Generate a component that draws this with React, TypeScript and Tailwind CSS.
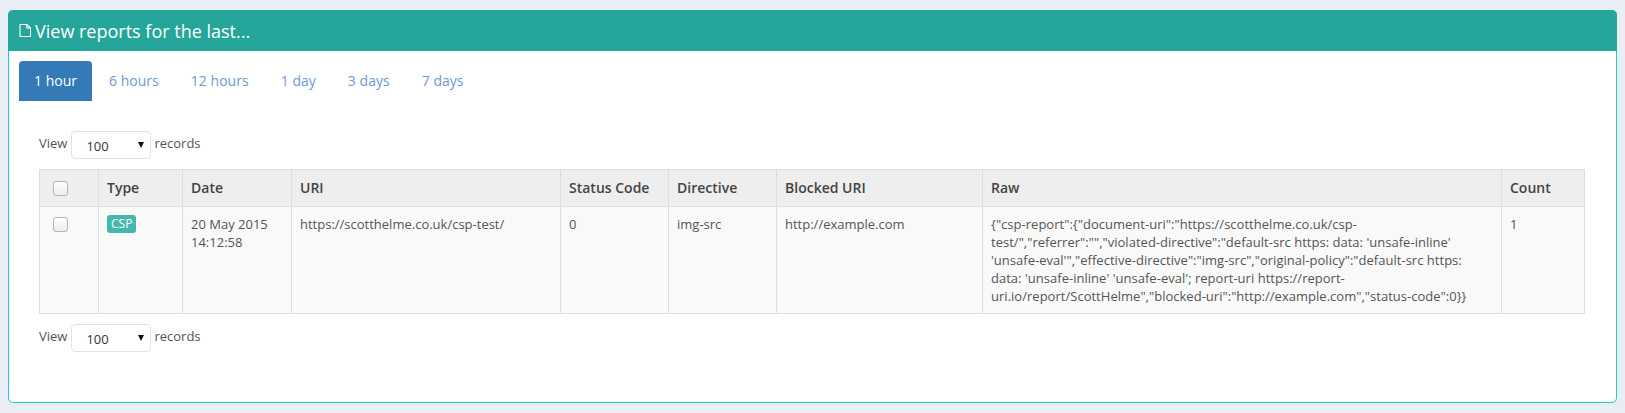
const tabs = ['1 hour', '6 hours', '12 hours', '1 day', '3 days', '7 days']

const raw = `{"csp-report":{"document-uri":"https://scotthelme.co.uk/csp-test/","referrer":"","violated-directive":"default-src https: data: 'unsafe-inline' 'unsafe-eval'","effective-directive":"img-src","original-policy":"default-src https: data: 'unsafe-inline' 'unsafe-eval'; report-uri https://report-uri.io/report/ScottHelme","blocked-uri":"http://example.com","status-code":0}}`

const cell = 'border border-[#dddddd] px-2 py-2 align-top text-[13px] leading-[18px] font-normal text-left'
const head = 'border border-[#dddddd] px-2 py-[9px] align-top text-[14px] leading-[18px] font-semibold text-left text-[#444444]'

function Checkbox() {
  return (
    <span className="block w-[15px] h-[15px] mt-[2px] ml-[5px] rounded-[3px] border border-[#b5b5b5] bg-gradient-to-b from-white to-[#ececec]" />
  )
}

function RecordsSelect() {
  return (
    <div className="flex items-center text-[13px] leading-[18px] text-[#555555]">
      <span className="mr-[4px] mb-[4px]">View</span>
      <div className="relative w-[80px] h-[28px] rounded-[4px] border border-[#e3e3e3] bg-white">
        <span className="block pl-[14px] pt-[5px] text-[13px] leading-[18px] text-[#333333]">100</span>
        <svg className="absolute right-[6px] top-[10px]" width="6" height="6" viewBox="0 0 6 6">
          <path d="M0 0h6L3 6z" fill="#111111" />
        </svg>
      </div>
      <span className="ml-[3px] mb-[4px]">records</span>
    </div>
  )
}

export default function App() {
  return (
    <div className="min-h-[413px] bg-[#e9edf4] px-2 pt-[10px] pb-[10px] font-['Open_Sans',sans-serif]">
      <div className="h-[393px] rounded-[5px] border border-[#1fd0c0] bg-white">
        {/* Header */}
        <div className="-mt-px -mx-px h-[41px] flex items-center pl-[11px] rounded-t-[5px] bg-[#26a69a] text-white text-[18px] leading-[20px]">
          <svg className="mr-[3px]" width="13" height="15" viewBox="0 0 13 15" fill="none" stroke="white" strokeWidth="1.1">
            <path d="M1 1.5h6.8L11.5 5v8.5H1z" />
            <path d="M7.8 1.5V5h3.7" />
          </svg>
          <span>View reports for the last...</span>
        </div>

        {/* Tabs */}
        <div className="flex gap-[2px] pt-[10px] pl-[10px]">
          {tabs.map((t, i) => (
            <span
              key={t}
              className={
                i === 0
                  ? 'h-[40px] px-[15px] py-[10px] rounded-t-[4px] bg-[#337ab7] text-white text-[14px] leading-[20px]'
                  : 'h-[40px] px-[15px] py-[10px] text-[#7098d4] text-[14px] leading-[20px] tracking-[0.03px]'
              }
            >
              {t}
            </span>
          ))}
        </div>

        {/* Table */}
        <div className="px-[30px] pt-[30px]">
          <RecordsSelect />
          <table className="mt-[10px] w-[1545px] table-fixed border-collapse text-[#555555]">
            <colgroup>
              <col className="w-[59px]" />
              <col className="w-[84px]" />
              <col className="w-[109px]" />
              <col className="w-[269px]" />
              <col className="w-[108px]" />
              <col className="w-[108px]" />
              <col className="w-[206px]" />
              <col className="w-[519px]" />
              <col className="w-[83px]" />
            </colgroup>
            <thead>
              <tr className="bg-[#eeeeee]">
                <th className={head}><Checkbox /></th>
                <th className={head}>Type</th>
                <th className={head}>Date</th>
                <th className={head}>URI</th>
                <th className={head}>Status Code</th>
                <th className={head}>Directive</th>
                <th className={head}>Blocked URI</th>
                <th className={head}>Raw</th>
                <th className={head}>Count</th>
              </tr>
            </thead>
            <tbody>
              <tr className="bg-[#f9f9f9]">
                <td className={cell}><Checkbox /></td>
                <td className={cell}>
                  <span className="inline-block h-[18px] px-[4px] rounded-[3px] bg-[#45b8ae] text-white text-[12px] leading-[18px] align-top">CSP</span>
                </td>
                <td className={cell}>20 May 2015<br />14:12:58</td>
                <td className={cell}>https://scotthelme.co.uk/csp-test/</td>
                <td className={cell}>0</td>
                <td className={cell}>img-src</td>
                <td className={cell}>http://example.com</td>
                <td className={cell + ' break-words tracking-[0.02px]'}>{raw}</td>
                <td className={cell}>1</td>
              </tr>
            </tbody>
          </table>
          <div className="mt-[10px]">
            <RecordsSelect />
          </div>
        </div>
      </div>
    </div>
  )
}
